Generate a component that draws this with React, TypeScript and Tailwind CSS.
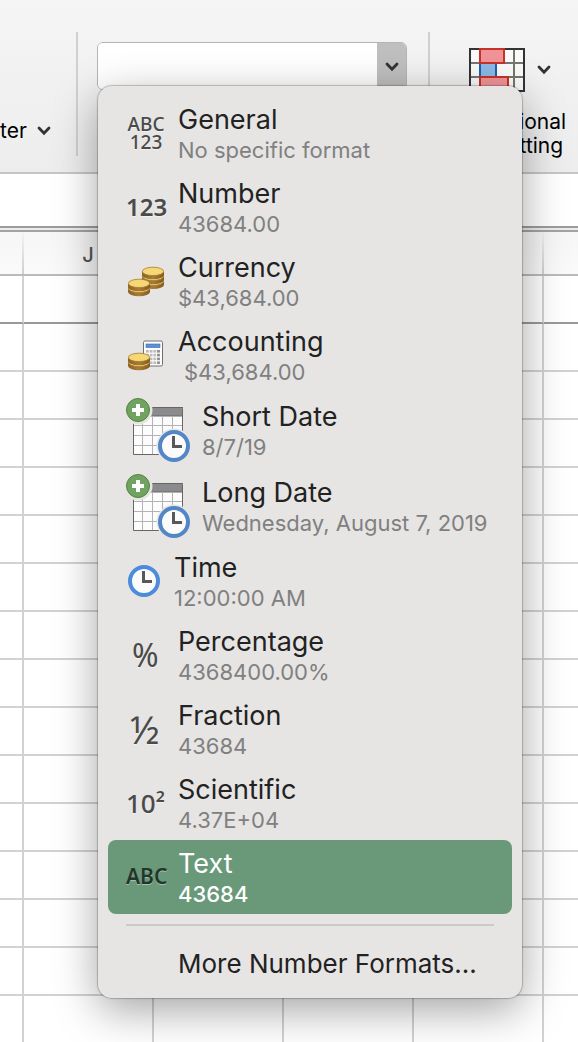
import { useId, type ReactNode } from 'react'

const ICON_TEXT =
  "font-['Noto_Sans','Open_Sans',sans-serif] text-[#4a4a4a] [text-shadow:0_1px_0_rgba(255,255,255,0.5)]"

function Chevron() {
  return (
    <svg width="14" height="10" viewBox="0 0 14 10" fill="none" aria-hidden="true">
      <path d="M2 2 L7 7.2 L12 2" stroke="#333" strokeWidth="2.8" strokeLinecap="round" strokeLinejoin="miter" />
    </svg>
  )
}

function Coins({ x, y, count }: { x: number; y: number; count: number }) {
  const id = useId()
  const levels = Array.from({ length: count }, (_, i) => count - 1 - i)
  return (
    <g>
      <defs>
        <linearGradient id={id} x1="0" x2="1" y1="0" y2="0">
          <stop offset="0" stopColor="#8b6126" />
          <stop offset="0.5" stopColor="#a97b35" />
          <stop offset="1" stopColor="#805820" />
        </linearGradient>
      </defs>
      {levels.map((i) => {
        const t = y + i * 4.9
        return (
          <g key={i}>
            <path d={`M${x} ${t + 4.5} v3.4 a11 4.4 0 0 0 22 0 v-3.4 z`} fill={`url(#${id})`} />
            <ellipse cx={x + 11} cy={t + 4.4} rx="10.7" ry="4.2" fill="#f5d774" stroke="#a47c33" strokeWidth="0.8" />
          </g>
        )
      })}
    </g>
  )
}

function CurrencyIcon() {
  return (
    <svg width="36" height="32" viewBox="0 0 36 32" aria-hidden="true">
      <Coins x={14} y={1} count={3} />
      <Coins x={0} y={13} count={2} />
    </svg>
  )
}

function AccountingIcon() {
  return (
    <svg width="36" height="32" viewBox="0 0 36 32" aria-hidden="true">
      <rect x="15.5" y="1" width="19" height="25" rx="1.5" fill="#fdfdfd" stroke="#707070" />
      <rect x="18" y="4" width="14" height="3.6" fill="#5b8fd6" stroke="#406fae" strokeWidth="0.6" />
      {[0, 1, 2, 3].map((r) =>
        [0, 1, 2, 3].map((c) => (
          <rect
            key={`${r}-${c}`}
            x={18 + c * 3.7}
            y={10 + r * 3.8}
            width="2.8"
            height="2.6"
            fill={c === 3 ? '#8c8c8c' : '#bcbcbc'}
          />
        )),
      )}
      <Coins x={0} y={13} count={2} />
    </svg>
  )
}

function ClockFace({ cx, cy, color }: { cx: number; cy: number; color: string }) {
  return (
    <g>
      <circle cx={cx} cy={cy} r="14" fill="#fbfbfb" stroke={color} strokeWidth="4" />
      <path d={`M${cx - 0.5} ${cy - 10} V${cy + 0.5} H${cx + 8}`} fill="none" stroke="#58585a" strokeWidth="3" />
    </g>
  )
}

function DateIcon() {
  return (
    <svg width="64" height="64" viewBox="0 0 64 64" aria-hidden="true">
      <path d="M7.5 10.5 H56.5 V56.5 H7.5 Z" fill="#fcfcfc" stroke="#666" />
      <rect x="8" y="10" width="48" height="8" fill="#8b8b8d" />
      <path d="M7 9.5 H57 M7 18 H57" stroke="#666" />
      <path d="M16.5 18.5 V56 M26.5 18.5 V56 M36.5 18.5 V56 M46.5 18.5 V56 M8 27.5 H56 M8 37.5 H56 M8 47.5 H56" stroke="#b3b3b3" />
      <circle cx="12" cy="12" r="14.5" fill="#e6e5e4" />
      <circle cx="12" cy="12" r="11.5" fill="#70a35f" stroke="#4f8542" />
      <path d="M12 6 V18 M6 12 H18" stroke="#fff" strokeWidth="4" />
      <circle cx="48" cy="48" r="17.5" fill="#e6e5e4" />
      <ClockFace cx={48} cy={48} color="#5286c6" />
    </svg>
  )
}

function TimeIcon() {
  return (
    <svg width="32" height="32" viewBox="0 0 32 32" aria-hidden="true">
      <ClockFace cx={16} cy={16} color="#4d8bdc" />
    </svg>
  )
}

type Format = {
  name: string
  sample: string
  icon: ReactNode
  kind?: 'date' | 'time'
  indent?: boolean
  selected?: boolean
}

const FORMATS: Format[] = [
  {
    name: 'General',
    sample: 'No specific format',
    icon: (
      <span className={`${ICON_TEXT} w-10 text-center text-[19px] leading-[18px] font-medium`}>
        ABC
        <br />
        123
      </span>
    ),
  },
  { name: 'Number', sample: '43684.00', icon: <span className={`${ICON_TEXT} text-[24px] font-semibold`}>123</span> },
  { name: 'Currency', sample: '$43,684.00', icon: <span className="pt-0.5 pl-0.5"><CurrencyIcon /></span> },
  { name: 'Accounting', sample: '$43,684.00', indent: true, icon: <span className="pt-0.5 pl-0.5"><AccountingIcon /></span> },
  { name: 'Short Date', sample: '8/7/19', kind: 'date', icon: <DateIcon /> },
  { name: 'Long Date', sample: 'Wednesday, August 7, 2019', kind: 'date', icon: <DateIcon /> },
  { name: 'Time', sample: '12:00:00 AM', kind: 'time', icon: <span className="pl-0.5"><TimeIcon /></span> },
  { name: 'Percentage', sample: '4368400.00%', icon: <span className={`${ICON_TEXT} pl-1.5 text-[32px]`}>%</span> },
  { name: 'Fraction', sample: '43684', icon: <span className={`${ICON_TEXT} pl-1 text-[38px] leading-10`}>½</span> },
  { name: 'Scientific', sample: '4.37E+04', icon: <span className={`${ICON_TEXT} text-[26px] leading-8 font-medium`}>10²</span> },
  {
    name: 'Text',
    sample: '43684',
    selected: true,
    icon: (
      <span className="font-['Noto_Sans','Open_Sans',sans-serif] text-[21px] font-semibold text-[#24352b] [text-shadow:0_1px_0_rgba(255,255,255,0.4)]">
        ABC
      </span>
    ),
  },
]

function FormatItem({ format }: { format: Format }) {
  const { name, sample, icon, kind, indent, selected } = format
  const height = kind === 'date' ? 'h-[76px]' : 'h-[74px]'
  const iconWidth = kind === 'date' ? 'w-[76px]' : kind === 'time' ? 'w-12' : 'w-[52px]'
  return (
    <button
      type="button"
      role="menuitemradio"
      aria-checked={!!selected}
      className={`flex w-full items-center rounded-lg pl-[18px] text-left whitespace-nowrap ${height} ${
        selected ? 'bg-[#6a997a] text-white' : 'text-[#222]'
      }`}
    >
      <span className={`flex shrink-0 items-center ${iconWidth}`}>{icon}</span>
      <span className="flex flex-col pt-0.5">
        <span className="text-[27px] leading-8">{name}</span>
        <span
          className={`text-[22px] leading-7 ${indent ? 'pl-1.5' : ''} ${
            selected ? 'font-medium text-white' : 'text-[#808080]'
          }`}
        >
          {sample}
        </span>
      </span>
    </button>
  )
}

function FormatMenu() {
  return (
    <div
      role="menu"
      aria-label="Number format"
      className="absolute top-[86px] left-[98px] w-[424px] rounded-[14px] bg-[#e6e5e4] p-2.5 shadow-[0_0_1px_1px_rgba(0,0,0,0.22),0_12px_44px_rgba(0,0,0,0.36)]"
    >
      {FORMATS.map((f) => (
        <FormatItem key={f.name} format={f} />
      ))}
      <hr className="mx-[18px] mt-2.5 border-t-2 border-[#cbcac9]" />
      <button type="button" role="menuitem" className="mt-3 flex h-[50px] w-full items-center pl-[70px] text-[26px] text-[#222]">
        More Number Formats...
      </button>
    </div>
  )
}

function ConditionalIcon() {
  return (
    <svg width="56" height="44" viewBox="0 0 56 44" aria-hidden="true">
      <rect x="1" y="1" width="54" height="42" fill="#fafafa" stroke="#333" strokeWidth="2" />
      <path d="M2 15 H54 M2 29 H54 M11 2 V42 M45 2 V42" stroke="#77756f" strokeWidth="2" />
      <rect x="12" y="16" width="32" height="12" fill="#fafafa" />
      <rect x="11" y="1" width="24" height="14" fill="#f0949a" stroke="#c83225" strokeWidth="2" />
      <rect x="11" y="16" width="16" height="12" fill="#8bb9e6" />
      <path d="M11 16 V28 M27 16 V28" stroke="#1f5faf" strokeWidth="2" />
      <rect x="11" y="29" width="28" height="13" fill="#f0949a" stroke="#c83225" strokeWidth="2" />
    </svg>
  )
}

function Ribbon() {
  return (
    <header className="flex h-[174px] shrink-0 border-b-2 border-[#c6c6c6] bg-linear-to-b from-[#f5f5f5] to-[#ededed] pt-8 text-[21px] leading-6 text-black">
      <div className="flex h-[124px] w-[78px] shrink-0 items-end border-r-2 border-[#d0d0d0] pb-[13px]">
        <button type="button" className="flex items-center gap-2.5">
          ter
          <Chevron />
        </button>
      </div>
      <div className="flex h-[124px] w-[352px] shrink-0 items-start border-r-2 border-[#d0d0d0] pt-2.5 pl-[19px]">
        <div className="flex h-12 w-[310px] overflow-hidden rounded-md border border-[#b5b5b5] bg-white">
          <input aria-label="Number format" className="min-w-0 flex-1 bg-white px-3 outline-none" />
          <button
            type="button"
            aria-label="Show number formats"
            className="flex w-[29px] items-center justify-center bg-[#bfbfbf] pt-0.5"
          >
            <Chevron />
          </button>
        </div>
      </div>
      <button type="button" className="ml-6 flex shrink-0 flex-col items-start pt-4 text-center">
        <span className="flex items-center gap-3 pl-[15px]">
          <ConditionalIcon />
          <Chevron />
        </span>
        <span className="mt-[18px]">
          Conditional
          <br />
          Formatting
        </span>
      </button>
    </header>
  )
}

const COLUMNS = ['', 'J', '', '', '', '']
const ROWS = Array.from({ length: 16 }, (_, i) => i)

function Sheet() {
  return (
    <table className="w-full table-fixed border-separate border-spacing-0">
      <colgroup>
        <col className="w-6" />
        <col className="w-[130px]" />
        <col className="w-[130px]" />
        <col className="w-[130px]" />
        <col className="w-[130px]" />
        <col />
      </colgroup>
      <thead>
        <tr>
          {COLUMNS.map((c, i) => (
            <th
              key={i}
              scope="col"
              className="h-11 border-b-2 border-[#bababa] bg-linear-to-b from-[#f6f6f6] to-[#fafafa] p-0 text-[20px] font-medium text-[#555]"
            >
              <span className="flex h-[42px] items-center">
                <span className="flex-1 pt-1">{c}</span>
                {i < COLUMNS.length - 1 && <span className="h-full w-0.5 bg-linear-to-b from-[#f4f4f4] to-[#cfcfcf]" />}
              </span>
            </th>
          ))}
        </tr>
      </thead>
      <tbody>
        {ROWS.map((r) => (
          <tr key={r}>
            {COLUMNS.map((_, i) => (
              <td
                key={i}
                className={`h-12 border-b-2 bg-white p-0 ${
                  i < COLUMNS.length - 1 ? 'border-r-2 border-r-[#d2d2d2]' : ''
                } ${r === 0 ? 'border-b-[#999]' : 'border-b-[#d2d2d2]'}`}
              />
            ))}
          </tr>
        ))}
      </tbody>
    </table>
  )
}

export default function App() {
  return (
    <div className="relative h-screen overflow-hidden bg-white font-['Inter','Liberation_Sans',sans-serif]">
      <Ribbon />
      <div className="h-[52px] bg-white" />
      <div className="h-1.5 border-t-2 border-b-2 border-t-[#9c9c9c] border-b-[#a3a3a3] bg-[#ececec]" />
      <Sheet />
      <FormatMenu />
    </div>
  )
}
